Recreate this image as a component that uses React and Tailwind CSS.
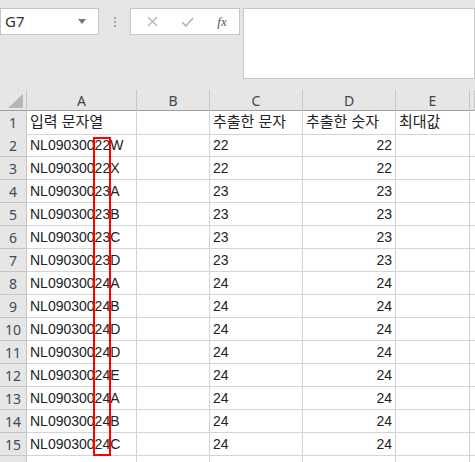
import React from "react"

const rows = [
  ["입력 문자열", "", "추출한 문자", "추출한 숫자", "최대값"],
  ["NL09030022W", "", "22", "22", ""],
  ["NL09030022X", "", "22", "22", ""],
  ["NL09030023A", "", "23", "23", ""],
  ["NL09030023B", "", "23", "23", ""],
  ["NL09030023C", "", "23", "23", ""],
  ["NL09030023D", "", "23", "23", ""],
  ["NL09030024A", "", "24", "24", ""],
  ["NL09030024B", "", "24", "24", ""],
  ["NL09030024D", "", "24", "24", ""],
  ["NL09030024D", "", "24", "24", ""],
  ["NL09030024E", "", "24", "24", ""],
  ["NL09030024A", "", "24", "24", ""],
  ["NL09030024B", "", "24", "24", ""],
  ["NL09030024C", "", "24", "24", ""],
  ["", "", "", "", ""],
]

const cols = ["A", "B", "C", "D", "E", ""]
const gridCols = "grid grid-cols-[27px_110px_73px_93px_93px_74px_5px]"

export default function App() {
  return (
    <div className="relative h-[462px] w-[475px] overflow-hidden bg-[#e6e6e6] font-['Liberation_Sans','Noto_Sans_CJK_KR',sans-serif] text-[#222]">
      {/* formula bar */}
      <div className="flex items-start pt-[8px]">
        <div className="flex h-[27px] w-[99px] items-center justify-between border border-[#c6c6c6] bg-white pl-[4px] pr-[12px] font-['Noto_Sans',sans-serif] text-[15px] text-[#333]">
          <span>G7</span>
          <svg width="8" height="5" viewBox="0 0 8 5"><path d="M0 0h8L4 5z" fill="#777" /></svg>
        </div>
        <div className="flex h-[27px] w-[31px] items-center justify-center">
          <div className="flex flex-col gap-[2px]">
            <span className="h-[2px] w-[2px] bg-[#a6a6a6]" />
            <span className="h-[2px] w-[2px] bg-[#a6a6a6]" />
            <span className="h-[2px] w-[2px] bg-[#a6a6a6]" />
          </div>
        </div>
        <div className="flex h-[27px] w-[110px] items-center border border-[#c6c6c6] bg-white">
          <div className="flex w-[38px] justify-center pl-[4px]">
            <svg width="11" height="11" viewBox="0 0 11 11"><path d="M1 1l9 9M10 1l-9 9" stroke="#b4b4b4" strokeWidth="1.3" /></svg>
          </div>
          <div className="flex w-[36px] justify-center">
            <svg width="13" height="10" viewBox="0 0 13 10"><path d="M1 5l4 4 7-8" stroke="#b4b4b4" strokeWidth="1.6" fill="none" /></svg>
          </div>
          <div className="flex w-[34px] justify-center font-['Liberation_Serif',serif] text-[13px] italic text-[#555]">fx</div>
        </div>
        <div className="ml-[3px] h-[71px] flex-1 border border-[#c6c6c6] bg-white" />
      </div>

      {/* sheet */}
      <div className="relative mt-[11px]">
        <div className={`${gridCols} h-[21px] border-b border-[#9f9f9f] font-['Noto_Sans',sans-serif] text-[14px] text-[#444]`}>
          <div className="relative border-r border-[#c6c6c6]">
            <svg className="absolute left-[8px] top-[4px]" width="15" height="14" viewBox="0 0 15 14"><path d="M15 0v14H0z" fill="#b6b6b6" /></svg>
          </div>
          {cols.map((c, i) => (
            <div key={i} className="flex items-center justify-center border-r border-[#c6c6c6]">{c}</div>
          ))}
        </div>
        {rows.map((r, i) => (
          <div key={i} className={`${gridCols} h-[23px] bg-white ${i === 0 ? "text-[15px]" : "text-[14px]"}`}>
            <div className="flex items-center justify-center border-r border-b border-[#c6c6c6] bg-[#e6e6e6] font-['Noto_Sans',sans-serif] text-[14px] text-[#3c4a5c]">{i < 15 ? i + 1 : ""}</div>
            <div className="flex items-center overflow-visible whitespace-nowrap border-r border-b border-[#d4d4d4] pl-[3px]">{r[0]}</div>
            <div className="border-r border-b border-[#d4d4d4]">{r[1]}</div>
            <div className="flex items-center whitespace-nowrap border-r border-b border-[#d4d4d4] pl-[3px]">{r[2]}</div>
            <div className={`flex items-center whitespace-nowrap border-r border-b border-[#d4d4d4] ${i === 0 ? "pl-[3px]" : "justify-end pr-[3px]"}`}>{r[3]}</div>
            <div className="flex items-center whitespace-nowrap border-r border-b border-[#d4d4d4] pl-[3px]">{r[4]}</div>
            <div className="border-b border-[#d4d4d4]" />
          </div>
        ))}
        <div className="absolute left-[93px] top-[47px] h-[319px] w-[18px] border-2 border-[#ff0000]" />
      </div>
    </div>
  )
}
